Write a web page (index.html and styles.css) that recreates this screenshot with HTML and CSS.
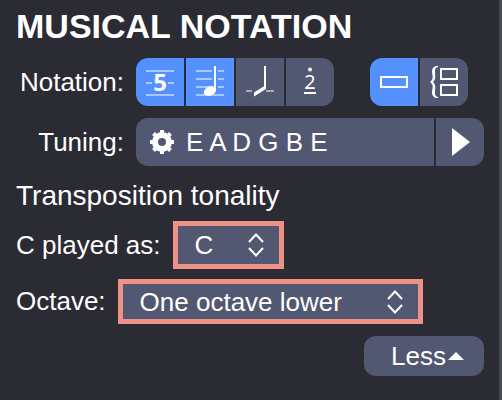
FILE: index.html
```
<!DOCTYPE html>
<html lang="en">

<head>
    <meta charset="UTF-8">
    <meta name="viewport" content="width=device-width, initial-scale=1.0">
    <link rel="stylesheet" href="styles.css">
    <title>Musical notation</title>
</head>

<body>

    <form class="panel">
        <h1>MUSICAL NOTATION</h1>

        <div class="row">
            <span class="label" id="notation-label">Notation:</span>
            <div class="group" role="group" aria-labelledby="notation-label">
                <button type="button" class="cell active" aria-label="Tablature">
                    <svg viewBox="0 0 48 48">
                        <path class="staff" d="M10 13H38M10 25H16M32 25H38M10 37H38"/>
                        <text class="digit bold" x="24" y="33">5</text>
                    </svg>
                </button>
                <button type="button" class="cell active" aria-label="Standard notation">
                    <svg viewBox="0 0 48 48">
                        <path class="staff" d="M10 13H26M32 13H38M10 21H26M32 21H38M10 29H24M32 29H38M10 37H38"/>
                        <path class="line" d="M29 8V33"/>
                        <ellipse class="fill" cx="24" cy="33" rx="6.5" ry="4.5" transform="rotate(-25 24 33)"/>
                    </svg>
                </button>
                <button type="button" class="cell" aria-label="Slash notation">
                    <svg viewBox="0 0 48 48">
                        <path class="staff" d="M10 33H16M30 33H38"/>
                        <path class="line" d="M29 8V30"/>
                        <path class="fill" d="M18 34.5L30 27V31L18 38.5Z"/>
                    </svg>
                </button>
                <button type="button" class="cell" aria-label="Numbered notation">
                    <svg viewBox="0 0 48 48">
                        <circle class="fill" cx="24" cy="11.5" r="2"/>
                        <text class="digit" x="24" y="31">2</text>
                        <path class="line" d="M18 35H30"/>
                    </svg>
                </button>
            </div>
            <div class="group layout" role="group" aria-label="Track view">
                <button type="button" class="cell active" aria-label="Single track">
                    <svg viewBox="0 0 48 48">
                        <rect class="line" x="11" y="19" width="26" height="10"/>
                    </svg>
                </button>
                <button type="button" class="cell" aria-label="Multitrack">
                    <svg viewBox="0 0 48 48">
                        <path class="fill" d="M18 8C14 8 12 10 12 13.5C12 17 14.5 21 10 24C14.5 27 12 31 12 34.5C12 38 14 40 18 40V39C15.5 38.5 15 37 15 34.5C15 31 16.5 27 13 24C16.5 21 15 17 15 13.5C15 11 15.5 9.5 18 9Z"/>
                        <rect class="line" x="21" y="11" width="16" height="10"/>
                        <rect class="line" x="21" y="27" width="16" height="10"/>
                    </svg>
                </button>
            </div>
        </div>

        <div class="row">
            <span class="label" id="tuning-label">Tuning:</span>
            <div class="group wide" role="group" aria-labelledby="tuning-label">
                <button type="button" class="tuning">
                    <svg class="gear" viewBox="-12 -12 24 24">
                        <g class="fill">
                            <rect x="-2" y="-12" width="4" height="24"/>
                            <rect x="-2" y="-12" width="4" height="24" transform="rotate(45)"/>
                            <rect x="-2" y="-12" width="4" height="24" transform="rotate(90)"/>
                            <rect x="-2" y="-12" width="4" height="24" transform="rotate(135)"/>
                            <circle r="10"/>
                        </g>
                        <circle class="hole" r="4"/>
                    </svg>
                    <span>E A D G B E</span>
                </button>
                <button type="button" class="cell" aria-label="Play tuning">
                    <svg viewBox="0 0 48 48">
                        <path class="fill" d="M16 10L34 24L16 38Z"/>
                    </svg>
                </button>
            </div>
        </div>

        <h2>Transposition tonality</h2>

        <div class="row">
            <label for="tonality">C played as:</label>
            <div class="select tonality">
                <select id="tonality">
                    <option>C</option>
                </select>
                <svg class="arrows" viewBox="0 0 16 24">
                    <path class="line" d="M1 9L8 1.5L15 9M1 15L8 22.5L15 15"/>
                </svg>
            </div>
        </div>

        <div class="row octave-row">
            <label for="octave">Octave:</label>
            <div class="select octave">
                <select id="octave">
                    <option>One octave lower</option>
                </select>
                <svg class="arrows" viewBox="0 0 16 24">
                    <path class="line" d="M1 9L8 1.5L15 9M1 15L8 22.5L15 15"/>
                </svg>
            </div>
        </div>

        <button type="button" class="less">
            Less
            <svg class="caret" viewBox="0 0 16 8">
                <path class="fill" d="M0 8L8 0L16 8Z"/>
            </svg>
        </button>
    </form>

</body>

</html>
```

FILE: styles.css
```
* {
    box-sizing: border-box;
}

body {
    margin: 0;
    background-color: #2b2b34;
    color: white;
    font-family: "Liberation Sans", Arial, sans-serif;
    font-size: 26px;
}

.panel {
    min-height: 100vh;
    padding: 6px 15px 24px 16px;
    border-right: 3px solid #464751;
    display: flex;
    flex-direction: column;
    white-space: nowrap;
}

h1 {
    margin: 0;
    font-size: 34px;
    line-height: 40px;
}

h2 {
    margin: 14px 0 10px;
    font-size: 28px;
    font-weight: normal;
    line-height: 31px;
}

h2 + .row {
    margin-top: 0;
}

.row {
    display: flex;
    align-items: center;
    gap: 12px;
    margin-top: 12px;
}

.octave-row {
    margin-top: 10px;
}

.label {
    width: 108px;
    text-align: right;
}

button,
select {
    border: none;
    padding: 0;
    background-color: #525871;
    color: white;
    font: inherit;
    cursor: pointer;
}

svg {
    display: block;
}

/* button groups */
.group {
    display: flex;
    gap: 2px;
    border-radius: 12px;
    overflow: hidden;
}

.layout {
    margin-left: 24px;
}

.wide {
    flex: 1;
}

.cell {
    width: 48px;
    height: 48px;
}

.active {
    background-color: #5590ff;
}

.tuning {
    flex: 1;
    height: 48px;
    padding-left: 14px;
    display: flex;
    align-items: center;
    gap: 12px;
}

/* icons */
.gear {
    width: 24px;
    height: 24px;
}

.fill {
    fill: white;
}

.hole {
    fill: #525871;
}

.line {
    fill: none;
    stroke: white;
    stroke-width: 2;
}

.staff {
    fill: none;
    stroke: white;
    stroke-width: 2;
    opacity: 0.5;
}

.digit {
    fill: white;
    font-family: "Noto Sans", sans-serif;
    font-size: 20px;
    text-anchor: middle;
}

.bold {
    font-size: 24px;
    font-weight: bold;
}

/* drop-downs */
.select {
    position: relative;
    border: 5px solid #ee9187;
}

.select select {
    display: block;
    width: 100%;
    height: 100%;
    padding: 0 44px 0 17px;
    border-radius: 0;
    appearance: none;
}

.tonality {
    width: 111px;
    height: 48px;
}

.octave {
    width: 305px;
    height: 45px;
}

.arrows {
    position: absolute;
    top: 50%;
    right: 15px;
    width: 16px;
    height: 24px;
    margin-top: -12px;
    pointer-events: none;
}

.less {
    align-self: flex-end;
    height: 40px;
    margin-top: 12px;
    padding: 0 20px 0 27px;
    border-radius: 12px;
    display: flex;
    align-items: center;
    gap: 2px;
}

.caret {
    width: 16px;
    height: 8px;
}
```
